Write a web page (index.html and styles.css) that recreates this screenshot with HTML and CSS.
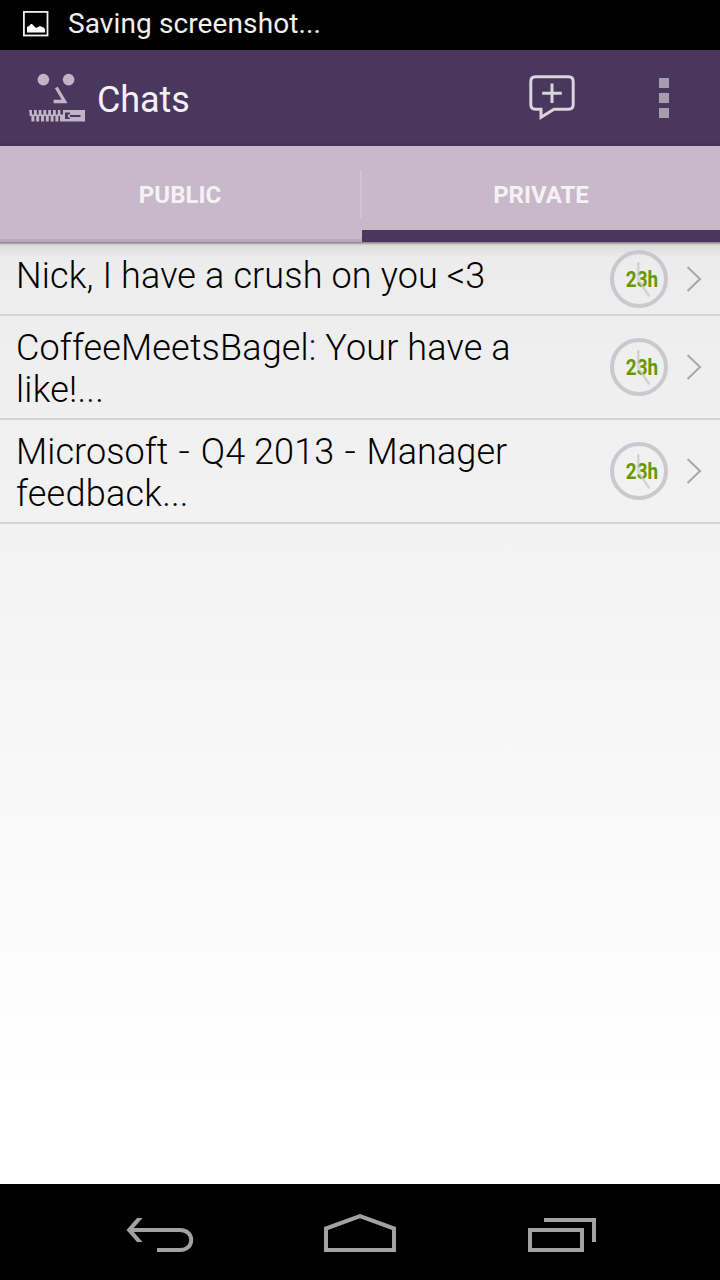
FILE: index.html
```html
<!DOCTYPE html>
<html lang="en">
<head>
<meta charset="utf-8">
<title>Chats</title>
<link rel="stylesheet" href="styles.css">
</head>
<body>
<div class="screen">
  <div class="status">
    <svg class="status-icon" width="26" height="26" viewBox="0 0 26 26"><rect x=".9" y=".9" width="23.600" height="23.600" fill="none" stroke="#f0f0ee" stroke-width="1.8"/><path d="M4 21.500V16l2-1 2-2h1l4 4 2-1 2-1 2 1 2 .5 1 2v3z" fill="#fff"/></svg>
    <span class="status-text">Saving screenshot...</span>
  </div>
  <header class="bar">
    <svg class="logo" width="58" height="52" viewBox="28 72 58 52" fill="#c0b5c7">
      <circle cx="43.400" cy="79.600" r="5.800"/><circle cx="68.600" cy="79.600" r="5.800"/>
      <path d="M56.300 87.500L64.600 101.500H53.600" fill="none" stroke="#c0b5c7" stroke-width="3.300"/>
      <path d="M29 110h3v6h-2zM34 110h2.800v6H34zM38.700 110h2.800v6h-2.800zM43.400 110h2.800v6h-2.800zM48.200 110H51v6h-2.800zM53 110h2.800v6H53zM57.800 110h2.600v6h-2.600z"/>
      <path d="M31.400 115h3v6.500h-3zM36.200 115h3v6.500h-3zM41 115h3v6.500h-3zM45.800 115h3v6.500h-3zM50.600 115h3v6.500h-3zM55.400 115h3v6.500h-3z"/>
      <path d="M29 114.600h34v1.300H30z"/>
      <path fill-rule="evenodd" d="M63 110h22v11.500H60v-6h3zM65 112.500v6.500h5v-1.500h-2v-3h2v-2zM70 115v2h10.500v-2z"/>
    </svg>
    <h1 class="title">Chats</h1>
    <svg class="new-chat" width="50" height="50" viewBox="527 72 50 50" fill="none" stroke="#d9d4dd" stroke-width="3"><path d="M535.500 76.800H568.500Q573.200 76.800 573.200 81.500V104.500Q573.200 109.200 568.500 109.200H554L541 117.300V109.200H535.500Q530.800 109.200 530.800 104.500V81.500Q530.800 76.800 535.500 76.800ZM552 83.500V103M542.200 93.200H561.800"/></svg>
    <div class="more"><i></i><i></i><i></i></div>
  </header>
  <nav class="tabs">
    <div class="tab tab-public">PUBLIC</div>
    <div class="divider"></div>
    <div class="tab tab-private">PRIVATE</div>
  </nav>
  <main class="list">
    <div class="row row-single">
      <p class="subject"><span class="s1">Nick, I have a crush on you &lt;3</span></p>
      <div class="clock"><span class="hours">23h</span><svg class="hands" width="58" height="58" viewBox="0 0 58 58"><circle cx="29" cy="29" r="27" /><path d="M28.300 12V30L39.500 46.500"/></svg></div>
      <svg class="chevron" width="16" height="28" viewBox="0 0 16 28"><path d="M1.500 2L14 14 1.500 26"/></svg>
    </div>
    <div class="row">
      <p class="subject"><span class="s2">CoffeeMeetsBagel: Your have a</span><br><span class="s3">like!...</span></p>
      <div class="clock"><span class="hours">23h</span><svg class="hands" width="58" height="58" viewBox="0 0 58 58"><circle cx="29" cy="29" r="27" /><path d="M28.300 12V30L39.500 46.500"/></svg></div>
      <svg class="chevron" width="16" height="28" viewBox="0 0 16 28"><path d="M1.500 2L14 14 1.500 26"/></svg>
    </div>
    <div class="row">
      <p class="subject"><span class="s4">Microsoft <span class="dash">-</span> Q4 2013 <span class="dash">-</span> Manager</span><br><span class="s5">feedback...</span></p>
      <div class="clock"><span class="hours">23h</span><svg class="hands" width="58" height="58" viewBox="0 0 58 58"><circle cx="29" cy="29" r="27" /><path d="M28.300 12V30L39.500 46.500"/></svg></div>
      <svg class="chevron" width="16" height="28" viewBox="0 0 16 28"><path d="M1.500 2L14 14 1.500 26"/></svg>
    </div>
  </main>
  <footer class="nav">
    <svg class="back" width="68" height="38" viewBox="126 1216 68 38"><path d="M131 1230H180C195 1230 195 1250 180 1250H157" stroke-width="4"/><path d="M137 1218h5.500l-10.500 12 10.500 12H137l-10.500-12z" class="solid"/></svg>
    <svg class="home" width="74" height="42" viewBox="323 1212 74 42"><path d="M326 1250V1228.500L360 1216.200 394 1228.500V1250Z" stroke-width="4"/></svg>
    <svg class="recent" width="70" height="36" viewBox="527 1217 70 36"><path d="M530 1230H582V1250H530ZM544 1220H594V1242" stroke-width="4"/></svg>
  </footer>
</div>
</body>
</html>
```
FILE: styles.css
```css
* { box-sizing: border-box; }
body { margin: 0; font-family: Roboto, "Liberation Sans", sans-serif; }
svg { display: block; flex: none; }
.screen { width: 720px; height: 1280px; display: flex; flex-direction: column; overflow: hidden; }
.status { height: 50px; flex: none; background: #000; display: flex; align-items: center; padding: 0 0 2px 23px; }
.status-text { margin-left: 19px; font-size: 28px; line-height: 32px; color: #f0f0ee; white-space: nowrap; letter-spacing: .11px; }
.bar { height: 96px; flex: none; display: flex; align-items: center; padding-left: 28px; background: linear-gradient(#49375d 0 92px, #423056 96px); }
.title { margin: 3px 0 0 11px; width: 430px; font-size: 36px; line-height: 42px; font-weight: 400; color: #f3f1f4; letter-spacing: -.1px; }
.new-chat { margin-bottom: 3px; }
.more { margin-left: 82px; display: grid; gap: 5px; }
.more i { width: 10px; height: 10px; background: #a69dae; }
.tabs { height: 96px; flex: none; display: flex; background: #c7b9ca; color: #f5f2f5; font-size: 24px; font-weight: 700; }
.tab { display: flex; align-items: center; justify-content: center; }
.tab-public { width: 360px; box-shadow: inset 0 -3px #b7a8ba; padding-top: 1px; }
.divider { width: 2px; flex: none; background: linear-gradient(transparent 24px, #d0c4d3 24px 72px, transparent 72px 93px, #b7a8ba 93px); }
.tab-private { width: 358px; border-bottom: 12px solid #49375d; padding-top: 13px; }
.list { flex: 1; background: linear-gradient(#8e8e8e 0 1px, #c8c8c8 2px, #dedede 4px, rgba(235,235,235,0) 16px), linear-gradient(#ececec, #fff 90%); }
.row { display: flex; height: 104px; align-items: center; border-bottom: 2px solid #d3d3d4; padding-left: 16px; }
.row-single { height: 74px; }
.subject { margin: 4px 0 0; width: 594px; font-size: 36px; line-height: 42px; font-weight: 300; color: #000; white-space: nowrap; }
.row-single .subject { margin: 0 0 4px; }
.s1, .s2 { letter-spacing: .14px; }
.s3, .s5 { letter-spacing: .24px; }
.s4 { letter-spacing: .09px; }
.dash { display: inline-block; padding: 0 2px; transform: scaleX(1.1); }
.row-single .clock, .row-single .chevron { margin-top: 2px; }
.clock { width: 58px; height: 58px; display: grid; place-items: center; }
.clock > * { grid-area: 1 / 1; }
.hours { font-size: 21.5px; line-height: 24px; font-weight: 700; color: #690; padding: 1px 0 0 6px; transform: scaleX(.88); }
.hands { fill: none; stroke: #c5c5cb; stroke-width: 4; opacity: .9; }
.hands path { stroke-width: 2.5; stroke: #cbcbce; opacity: .8; }
.chevron { margin-left: 18px; fill: none; stroke: #a7a7a7; stroke-width: 2; }
.nav { height: 96px; flex: none; background: #000; display: flex; align-items: center; padding-left: 126px; fill: none; stroke: #a2a2a2; }
.solid { fill: #a2a2a2; stroke: none; }
.back { margin-top: 6px; }
.home { margin: 2px 0 0 129px; }
.recent { margin: 6px 0 0 130px; }
```
